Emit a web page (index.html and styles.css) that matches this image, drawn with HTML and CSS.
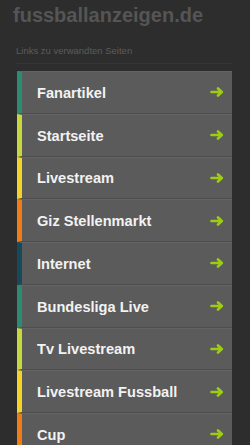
FILE: index.html
```html
<!DOCTYPE html>
<html>
	<head>
		<meta charset=utf-8>
		<meta name="viewport" content="width=device-width, initial-scale=1">
		<title>fussballanzeigen.de</title>
		<link rel="stylesheet" href="styles.css">
	</head>
	<body>
		<div id="header">
			<h1 class="site-title">fussballanzeigen.de</h1>
			<div class="subtitle">Links zu verwandten Seiten</div>
		</div>
		<ul class="link-list">
			<li class="link c-teal"><span>Fanartikel</span><svg class="arrow" viewBox="0 0 14 10"><path d="M1.5 5H11.5M8 1.5L11.8 5L8 8.5"/></svg></li>
			<li class="link c-lime"><span>Startseite</span><svg class="arrow" viewBox="0 0 14 10"><path d="M1.5 5H11.5M8 1.5L11.8 5L8 8.5"/></svg></li>
			<li class="link c-yellow"><span>Livestream</span><svg class="arrow" viewBox="0 0 14 10"><path d="M1.5 5H11.5M8 1.5L11.8 5L8 8.5"/></svg></li>
			<li class="link c-orange"><span>Giz Stellenmarkt</span><svg class="arrow" viewBox="0 0 14 10"><path d="M1.5 5H11.5M8 1.5L11.8 5L8 8.5"/></svg></li>
			<li class="link c-petrol"><span>Internet</span><svg class="arrow" viewBox="0 0 14 10"><path d="M1.5 5H11.5M8 1.5L11.8 5L8 8.5"/></svg></li>
			<li class="link c-teal"><span>Bundesliga Live</span><svg class="arrow" viewBox="0 0 14 10"><path d="M1.5 5H11.5M8 1.5L11.8 5L8 8.5"/></svg></li>
			<li class="link c-lime"><span>Tv Livestream</span><svg class="arrow" viewBox="0 0 14 10"><path d="M1.5 5H11.5M8 1.5L11.8 5L8 8.5"/></svg></li>
			<li class="link c-yellow"><span>Livestream Fussball</span><svg class="arrow" viewBox="0 0 14 10"><path d="M1.5 5H11.5M8 1.5L11.8 5L8 8.5"/></svg></li>
			<li class="link c-orange"><span>Cup</span><svg class="arrow" viewBox="0 0 14 10"><path d="M1.5 5H11.5M8 1.5L11.8 5L8 8.5"/></svg></li>
		</ul>
	</body>
</html>
```
FILE: styles.css
```css
body {
	margin: 0; padding: 0;
	background: #2d2d2d;
	font-family: 'Liberation Sans', Arial, sans-serif;
	overflow: hidden;
}

#header {
	margin: 0 18px 0 16px;
	padding-bottom: 7px;
	border-bottom: 1px solid #353535;
}
.site-title {
	margin: 4px 0 0 -3px;
	font-size: 20px;
	line-height: 23px;
	font-weight: bold;
	color: #555555;
}
.subtitle {
	margin-top: 18px;
	font-size: 9.5px;
	line-height: 11px;
	color: #5c5c5c;
}

.link-list {
	list-style: none;
	margin: 7px 0 0 17px;
	padding: 0;
	width: 215px;
}
.link {
	box-sizing: border-box;
	height: 42.75px;
	display: flex;
	align-items: center;
	justify-content: space-between;
	padding: 0 8px 0 15px;
	background: #5b5b5b;
	border-left: 5px solid #2b8c72;
	border-top: 1px solid #636363;
	border-bottom: 1px solid #4e4e4e;
	color: #f2f2f2;
	font-size: 14.6px;
	font-weight: bold;
}
.link span { padding-top: 1px; }

.arrow {
	width: 14px; height: 10px;
	fill: none;
	stroke: #9dcc14;
	stroke-width: 2.6;
	stroke-linecap: round;
	stroke-linejoin: round;
}

.c-teal { border-left-color: #2b8c72; }
.c-lime { border-left-color: #c6d83a; }
.c-yellow { border-left-color: #f5d226; }
.c-orange { border-left-color: #f07c16; }
.c-petrol { border-left-color: #16495a; }
```
